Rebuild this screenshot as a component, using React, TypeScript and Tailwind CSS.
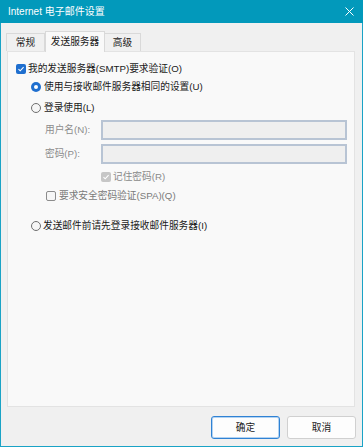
import React from "react"

function Check({ checked, disabled }: { checked?: boolean; disabled?: boolean }) {
  if (checked) {
    return (
      <span
        className={`flex h-[10px] w-[10px] shrink-0 items-center justify-center rounded-[2px] ${
          disabled ? "bg-[#c6c6c6]" : "bg-[#1f6fcf]"
        }`}
      >
        <svg width="8" height="8" viewBox="0 0 8 8">
          <path d="M1.5 4.2 L3.2 5.8 L6.6 2.2" fill="none" stroke="white" strokeWidth="1.1" />
        </svg>
      </span>
    )
  }
  return (
    <span className="h-[10px] w-[10px] shrink-0 rounded-[2px] border border-[#8c8c8c] bg-[#f6f6f6]" />
  )
}

function Radio({ checked }: { checked?: boolean }) {
  if (checked) {
    return (
      <span className="flex h-[10px] w-[10px] shrink-0 items-center justify-center rounded-full bg-[#1f6fcf]">
        <span className="h-[4px] w-[4px] rounded-full bg-white" />
      </span>
    )
  }
  return <span className="h-[10px] w-[10px] shrink-0 rounded-full border border-[#6f6f6f] bg-[#f6f6f6]" />
}

export default function App() {
  return (
    <div className="flex h-[447px] w-[363px] flex-col border border-t-0 border-[#1aa3c6] bg-[#f0f0f0] font-['Liberation_Sans','Noto_Sans_CJK_SC',sans-serif] text-[9.7px] leading-none text-[#1a1a1a]">
      {/* title bar */}
      <div className="-mx-[1px] flex h-[23px] items-center justify-between bg-[#0299bb] pl-[8px] pr-[9px] text-[10px] text-white">
        <span>Internet 电子邮件设置</span>
        <svg width="9" height="9" viewBox="0 0 9 9">
          <path d="M0.5 0.5 L8.5 8.5 M8.5 0.5 L0.5 8.5" stroke="white" strokeWidth="1" />
        </svg>
      </div>

      {/* tabs */}
      <div className="flex items-end pl-[5px] pt-[8px]">
        <div className="mb-[1px] flex h-[18px] w-[39px] items-center justify-center border border-b-0 border-[#d9d9d9] bg-[#f0f0f0]">
          常规
        </div>
        <div className="relative z-10 flex h-[21px] w-[60px] items-center justify-center border border-b-0 border-[#d9d9d9] bg-[#f9f9f9] pb-[1px]">
          发送服务器
        </div>
        <div className="mb-[1px] flex h-[18px] w-[36px] items-center justify-center border border-b-0 border-l-0 border-[#d9d9d9] bg-[#f0f0f0]">
          高级
        </div>
      </div>

      {/* panel */}
      <div className="-mt-[1px] ml-[6px] mr-[7px] flex h-[356px] flex-col border border-[#e3e3e3] bg-[#f9f9f9] pl-[8px]">
        <label className="mt-[8px] flex h-[18px] items-center gap-[2px]">
          <Check checked />
          <span>我的发送服务器(SMTP)要求验证(O)</span>
        </label>
        <label className="flex h-[18px] items-center gap-[3px] pl-[15px]">
          <Radio checked />
          <span>使用与接收邮件服务器相同的设置(U)</span>
        </label>
        <label className="mt-[3px] flex h-[18px] items-center gap-[3px] pl-[15px]">
          <Radio />
          <span>登录使用(L)</span>
        </label>
        <div className="mt-[3px] flex h-[20px] items-center pl-[29px]">
          <span className="w-[56px] text-[#8c8c8c]">用户名(N):</span>
          <div className="h-[20px] w-[246px] border-2 border-[#b8c4d4] bg-[#efefef]" />
        </div>
        <div className="mt-[4px] flex h-[20px] items-center pl-[29px]">
          <span className="w-[56px] text-[#8c8c8c]">密码(P):</span>
          <div className="h-[20px] w-[246px] border-2 border-[#b8c4d4] bg-[#efefef]" />
        </div>
        <label className="mt-[4px] flex h-[18px] items-center gap-[2px] pl-[85px] text-[#8a8a8a]">
          <Check checked disabled />
          <span>记住密码(R)</span>
        </label>
        <label className="mt-[1px] flex h-[18px] items-center gap-[3px] pl-[30px] text-[#7a7a7a]">
          <Check />
          <span>要求安全密码验证(SPA)(Q)</span>
        </label>
        <label className="mt-[12px] flex h-[18px] items-center gap-[2px] pl-[15px]">
          <Radio />
          <span>发送邮件前请先登录接收邮件服务器(I)</span>
        </label>
      </div>

      {/* buttons */}
      <div className="mt-[9px] flex justify-end gap-[7px] pr-[6px]">
        <button className="flex h-[23px] w-[69px] items-center justify-center rounded-[3px] border border-[#2f82d4] bg-[#fdfdfd] shadow-[inset_0_0_0_1px_#b3d3f2]">
          确定
        </button>
        <button className="flex h-[23px] w-[69px] items-center justify-center rounded-[3px] border border-[#d0d0d0] bg-[#fdfdfd]">
          取消
        </button>
      </div>
    </div>
  )
}
